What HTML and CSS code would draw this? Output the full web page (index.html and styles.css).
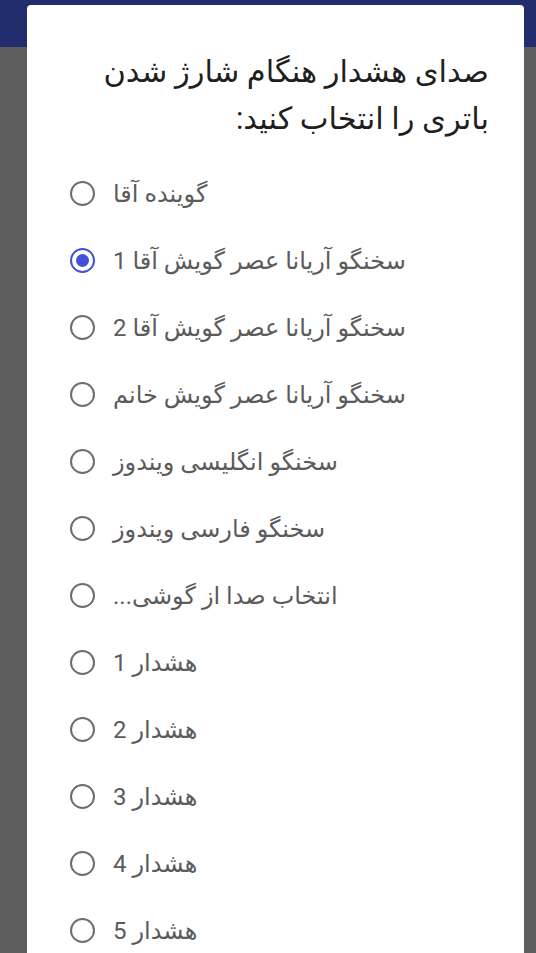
FILE: index.html
```html
<!DOCTYPE html>
<html lang="fa">
<head>
<meta charset="utf-8">
<link rel="stylesheet" href="styles.css">
</head>
<body>
<div class="appbar"></div>
<div class="dialog">
  <h1 class="title" dir="rtl">صدای هشدار هنگام شارژ شدن باتری را انتخاب کنید:</h1>
  <ul class="options">
    <li class="option"><span class="radio"></span><span class="label" dir="rtl">گوینده آقا</span></li>
    <li class="option"><span class="radio checked"></span><span class="label" dir="rtl">سخنگو آریانا عصر گویش آقا 1</span></li>
    <li class="option"><span class="radio"></span><span class="label" dir="rtl">سخنگو آریانا عصر گویش آقا 2</span></li>
    <li class="option"><span class="radio"></span><span class="label" dir="rtl">سخنگو آریانا عصر گویش خانم</span></li>
    <li class="option"><span class="radio"></span><span class="label" dir="rtl">سخنگو انگلیسی ویندوز</span></li>
    <li class="option"><span class="radio"></span><span class="label" dir="rtl">سخنگو فارسی ویندوز</span></li>
    <li class="option"><span class="radio"></span><span class="label" dir="rtl">انتخاب صدا از گوشی...</span></li>
    <li class="option"><span class="radio"></span><span class="label" dir="rtl">هشدار 1</span></li>
    <li class="option"><span class="radio"></span><span class="label" dir="rtl">هشدار 2</span></li>
    <li class="option"><span class="radio"></span><span class="label" dir="rtl">هشدار 3</span></li>
    <li class="option"><span class="radio"></span><span class="label" dir="rtl">هشدار 4</span></li>
    <li class="option"><span class="radio"></span><span class="label" dir="rtl">هشدار 5</span></li>
  </ul>
</div>
</body>
</html>
```
FILE: styles.css
```css
html, body {
  margin: 0;
  padding: 0;
  height: 100%;
  overflow: hidden;
}
body {
  background: #5e5e5e;
  font-family: Roboto, "DejaVu Sans", sans-serif;
}
.appbar {
  height: 47px;
  background: #222d6d;
}
.dialog {
  position: absolute;
  left: 27px;
  top: 5px;
  width: 497px;
  height: 948px;
  overflow: hidden;
  background: #ffffff;
  border-radius: 4px 4px 0 0;
  box-sizing: border-box;
  padding: 43px 35px 0 43px;
}
.title {
  margin: 0;
  font-size: 30.5px;
  font-weight: normal;
  line-height: 47px;
  color: #1f1f1f;
  text-align: right;
}
.options {
  list-style: none;
  margin: 18px 0 0 0;
  padding: 0;
}
.option {
  display: flex;
  align-items: center;
  height: 67px;
  direction: ltr;
}
.radio {
  width: 25px;
  height: 25px;
  box-sizing: border-box;
  border: 2.5px solid #6d6d6d;
  border-radius: 50%;
  flex: none;
  display: flex;
  align-items: center;
  justify-content: center;
}
.radio.checked {
  border-color: #4152d9;
}
.radio.checked::after {
  content: "";
  width: 13px;
  height: 13px;
  border-radius: 50%;
  background: #4152d9;
}
.label {
  margin-left: 18px;
  font-size: 24px;
  color: #5b5b5b;
}
```
